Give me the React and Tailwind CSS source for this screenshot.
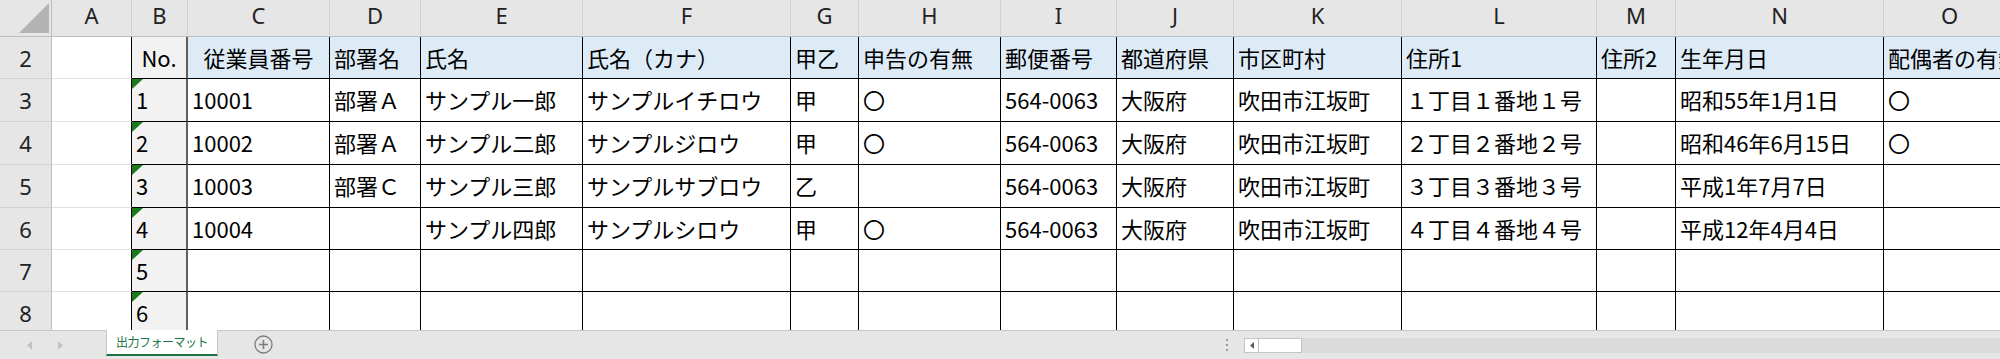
import React from 'react'

const cols = [
  { key: 'A', w: 'w-[80px]' },
  { key: 'B', w: 'w-[56px]' },
  { key: 'C', w: 'w-[142px]' },
  { key: 'D', w: 'w-[91px]' },
  { key: 'E', w: 'w-[162px]' },
  { key: 'F', w: 'w-[208px]' },
  { key: 'G', w: 'w-[68px]' },
  { key: 'H', w: 'w-[142px]' },
  { key: 'I', w: 'w-[116px]' },
  { key: 'J', w: 'w-[117px]' },
  { key: 'K', w: 'w-[168px]' },
  { key: 'L', w: 'w-[195px]' },
  { key: 'M', w: 'w-[79px]' },
  { key: 'N', w: 'w-[208px]' },
  { key: 'O', w: 'w-[132px]' },
];

const rows = [
  ['No.', '従業員番号', '部署名', '氏名', '氏名（カナ）', '甲乙', '申告の有無', '郵便番号', '都道府県', '市区町村', '住所1', '住所2', '生年月日', '配偶者の有無'],
  ['1', '10001', '部署Ａ', 'サンプル一郎', 'サンプルイチロウ', '甲', '〇', '564-0063', '大阪府', '吹田市江坂町', '１丁目１番地１号', '', '昭和55年1月1日', '〇'],
  ['2', '10002', '部署Ａ', 'サンプル二郎', 'サンプルジロウ', '甲', '〇', '564-0063', '大阪府', '吹田市江坂町', '２丁目２番地２号', '', '昭和46年6月15日', '〇'],
  ['3', '10003', '部署Ｃ', 'サンプル三郎', 'サンプルサブロウ', '乙', '', '564-0063', '大阪府', '吹田市江坂町', '３丁目３番地３号', '', '平成1年7月7日', ''],
  ['4', '10004', '', 'サンプル四郎', 'サンプルシロウ', '甲', '〇', '564-0063', '大阪府', '吹田市江坂町', '４丁目４番地４号', '', '平成12年4月4日', ''],
  ['5'],
  ['6'],
];

const rowHeights = ['h-[42px]', 'h-[43px]', 'h-[43px]', 'h-[43px]', 'h-[42px]', 'h-[42px]', 'h-[42px]'];

const headFont = "font-['Noto_Sans','Liberation_Sans',sans-serif]";
const cellFont = "font-['Noto_Sans_CJK_JP','Noto_Sans',sans-serif]";

const DataCell = ({ col, ci, ri, text }) => {
  const isB = col.key === 'B';
  const centered = ri === 0 && (ci === 1 || ci === 2);
  return (
    <div
      className={`relative flex shrink-0 items-center overflow-hidden whitespace-nowrap border-b border-black pb-[2px] text-[22px] leading-none text-black ${cellFont} ${col.w} ${
        isB ? 'border-r-2 border-r-[#5f5f5f] bg-[#f2f2f2]' : 'border-r border-r-black'
      } ${ri === 0 && !isB ? 'bg-[#ddebf7]' : ''} ${centered ? 'justify-center' : 'pl-[4px]'}`}
    >
      {isB && ri > 0 && (
        <span className="absolute left-0 top-0 h-0 w-0 border-r-[11px] border-t-[10px] border-r-transparent border-t-[#1c7a1c]" />
      )}
      {text}
    </div>
  );
};

const TabBar = () => (
  <div className="flex h-[29px] w-[2000px] border-t border-[#c8c8c8] bg-[#e6e6e6]">
    <div className="flex w-[106px] items-center gap-[24px] pl-[27px]">
      <svg width="6" height="9" viewBox="0 0 6 9">
        <path d="M5 0 L0 4.5 L5 9 Z" fill="#c2c2c2" />
      </svg>
      <svg width="6" height="9" viewBox="0 0 6 9">
        <path d="M1 0 L6 4.5 L1 9 Z" fill="#c2c2c2" />
      </svg>
    </div>
    <div className="-mt-px flex h-[26px] w-[112px] items-center justify-center border-x border-b-2 border-x-[#c8c8c8] border-b-[#217346] bg-white pb-[1px] font-['Noto_Sans_CJK_JP',sans-serif] text-[12px] tracking-[-0.5px] text-[#217346]">
      出力フォーマット
    </div>
    <div className="ml-[36px] flex items-center pb-[2px]">
      <svg width="19" height="19" viewBox="0 0 19 19">
        <circle cx="9.5" cy="9.5" r="8.5" fill="none" stroke="#7c7c7c" strokeWidth="1.3" />
        <path d="M9.5 5v9M5 9.5h9" stroke="#7c7c7c" strokeWidth="1.6" />
      </svg>
    </div>
    <div className="ml-auto flex items-center">
      <div className="flex w-[4px] flex-col items-center gap-[3px]">
        <span className="h-[2px] w-[2px] bg-[#9c9c9c]" />
        <span className="h-[2px] w-[2px] bg-[#9c9c9c]" />
        <span className="h-[2px] w-[2px] bg-[#9c9c9c]" />
      </div>
      <div className="ml-[15px] flex h-[15px] w-[756px] bg-[#dbdbdb]">
        <div className="flex w-[15px] items-center justify-center border border-[#c4c4c4] bg-white">
          <svg width="4" height="7" viewBox="0 0 4 7">
            <path d="M4 0 L0 3.5 L4 7 Z" fill="#5c5c5c" />
          </svg>
        </div>
        <div className="w-[43px] border border-l-0 border-[#c4c4c4] bg-white" />
      </div>
    </div>
  </div>
);

const App = () => {
  return (
    <div className="h-[359px] w-[2000px] overflow-hidden bg-white">
      <div className="h-[330px] w-[2000px] overflow-hidden">
        {/* column letters */}
        <div className={`flex h-[37px] bg-[#e6e6e6] ${headFont}`}>
          <div className="relative w-[52px] shrink-0 border-b border-r border-[#bdbdbd]">
            <svg className="absolute left-[19px] top-[3px]" width="30" height="30" viewBox="0 0 30 30">
              <path d="M30 0 L30 30 L0 30 Z" fill="#b3b3b3" />
            </svg>
          </div>
          {cols.map((col) => (
            <div
              key={col.key}
              className={`flex shrink-0 items-center justify-center border-b border-r border-b-[#bdbdbd] border-r-[#d2d2d2] pb-[7px] text-[22px] leading-none text-[#222] ${col.w}`}
            >
              {col.key}
            </div>
          ))}
        </div>

        {rows.map((row, ri) => (
          <div key={ri} className={`flex ${rowHeights[ri]}`}>
            <div className={`flex w-[52px] shrink-0 items-center justify-center border-b border-r border-b-[#d2d2d2] border-r-[#bdbdbd] bg-[#e6e6e6] text-[22px] leading-none text-[#222] ${headFont}`}>
              {ri + 2}
            </div>
            <div className="w-[80px] shrink-0 border-b border-r border-b-[#e1e1e1] border-r-black" />
            {cols.slice(1).map((col, i) => (
              <DataCell key={col.key} col={col} ci={i + 1} ri={ri} text={row[i] || ''} />
            ))}
          </div>
        ))}
      </div>
      <TabBar />
    </div>
  );
}

export default App;
